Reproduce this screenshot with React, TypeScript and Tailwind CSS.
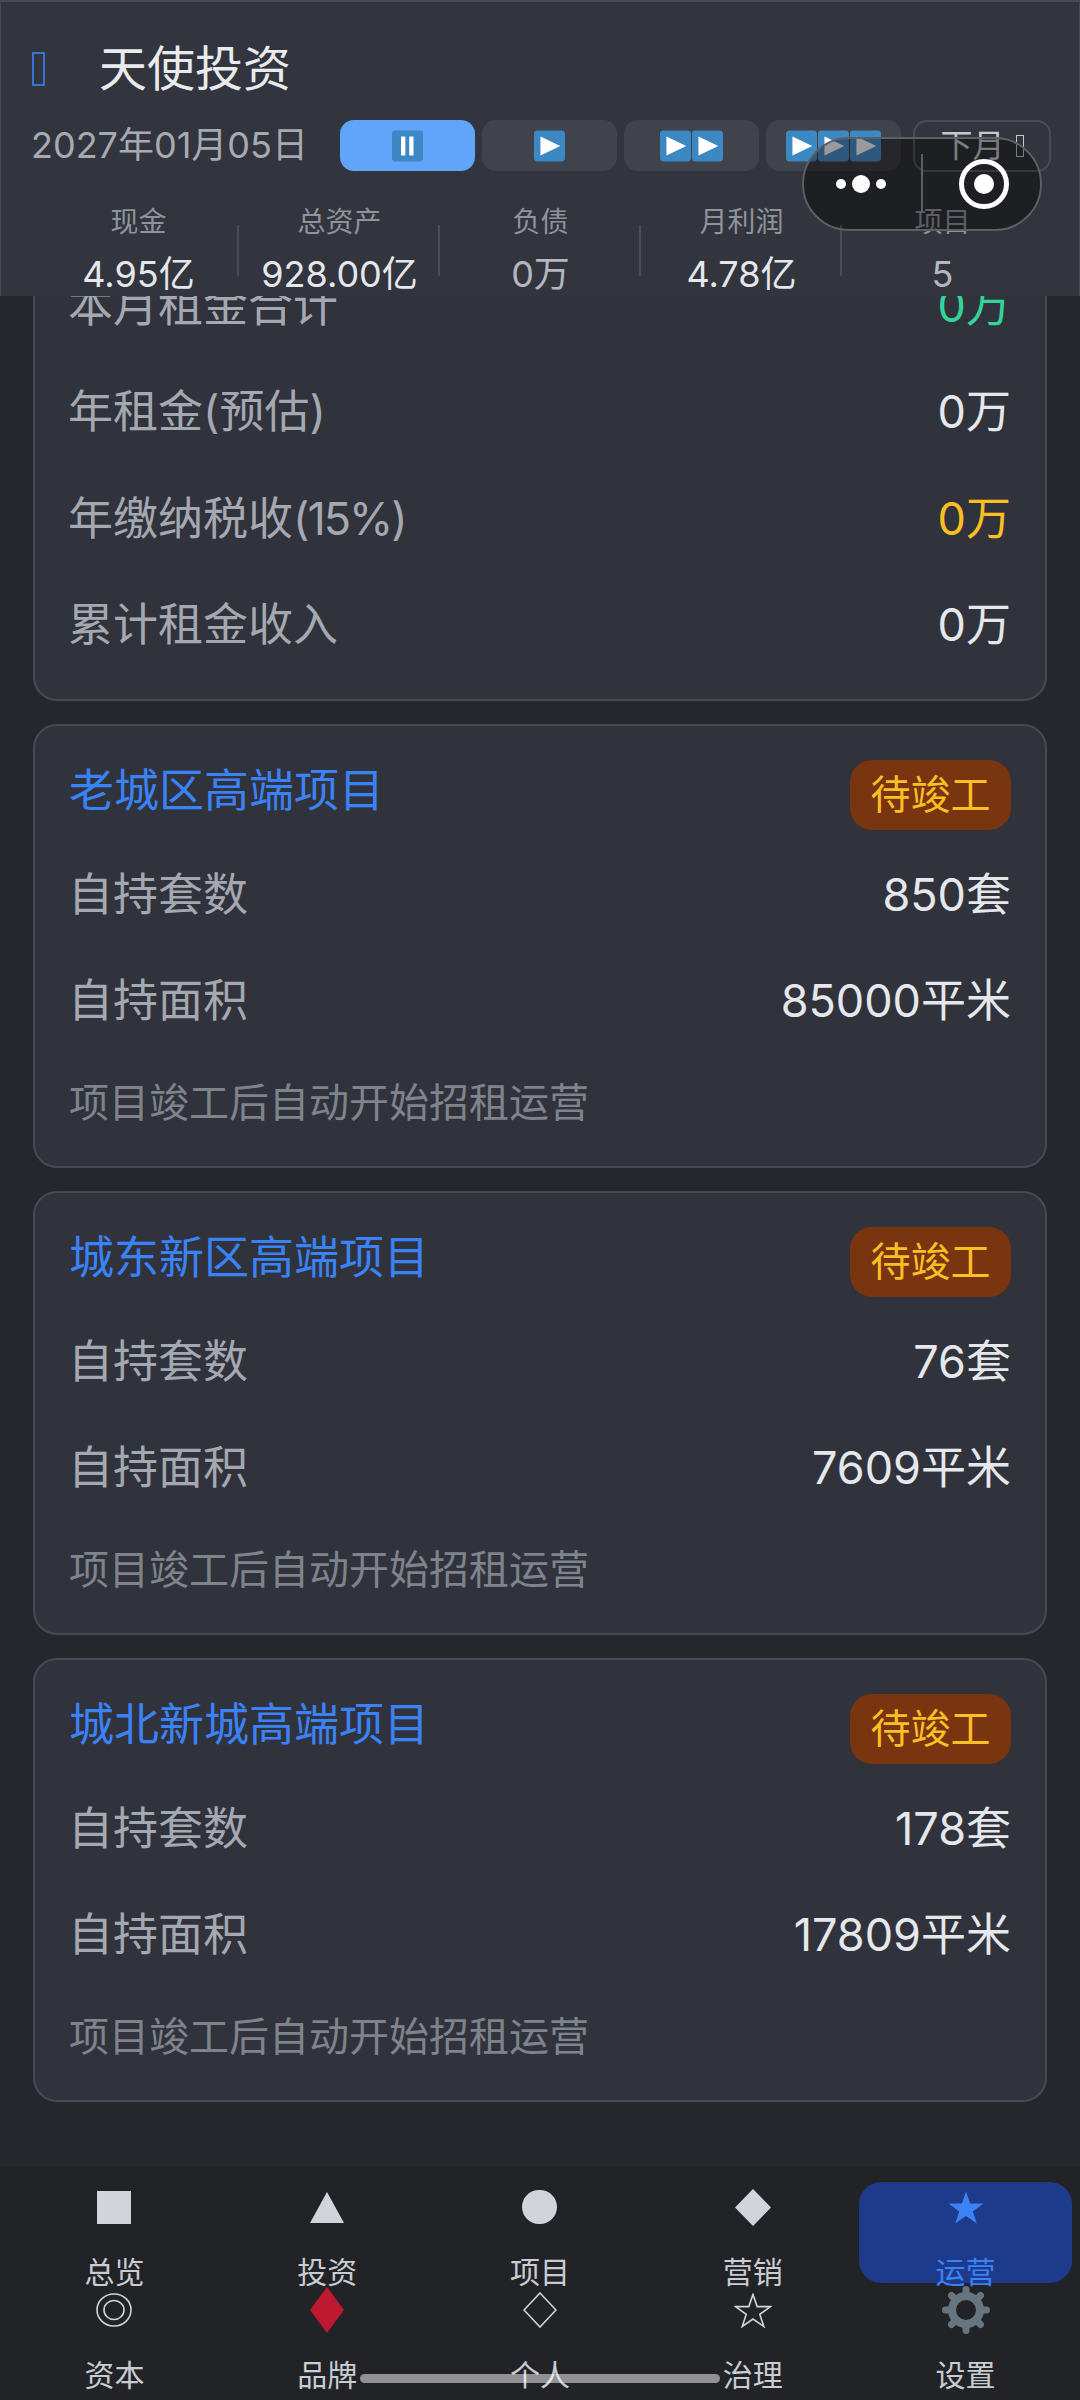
import React from "react";

const Play = () => (
  <svg width="31" height="32" viewBox="0 0 36 36" className="shrink-0">
    <rect x="0" y="0" width="36" height="36" rx="4" fill="#3b88c3" />
    <path d="M7.5 7 L30.5 18 L7.5 29 Z" fill="#ffffff" />
  </svg>
);

const Pause = () => (
  <svg width="31" height="32" viewBox="0 0 36 36" className="shrink-0">
    <rect x="0" y="0" width="36" height="36" rx="4" fill="#3b88c3" />
    <rect x="10.5" y="7" width="5" height="22" fill="#ffffff" />
    <rect x="20" y="7" width="5" height="22" fill="#ffffff" />
  </svg>
);

const SpeedButton = ({ active, children }: { active?: boolean; children: React.ReactNode }) => (
  <div
    className={
      active
        ? "flex h-[51px] w-[135px] items-center justify-center gap-[1px] rounded-[14px] bg-[#60a5fa]"
        : "flex h-[51px] w-[135px] items-center justify-center gap-[1px] rounded-[14px] bg-white/[0.07]"
    }
  >
    {children}
  </div>
);

const stats = [
  { label: "现金", value: "4.95亿", color: "text-[#e5e7eb]" },
  { label: "总资产", value: "928.00亿", color: "text-[#e5e7eb]" },
  { label: "负债", value: "0万", color: "text-[#b4b7bd]" },
  { label: "月利润", value: "4.78亿", color: "text-[#e5e7eb]" },
  { label: "项目", value: "5", color: "text-[#b4b7bd]" },
];

const Header = () => (
  <header className="absolute left-0 top-0 z-10 h-[296px] w-[1080px] border-x border-t-2 border-[#474a53] bg-[#32353d]">
    <div className="absolute left-[801px] top-[135px] h-[94px] w-[240px] rounded-full bg-[#1e1f23]" />
    <div className="relative z-10 flex h-full flex-col pl-[31px]">
      <div className="mt-[22px] flex h-[70px] shrink-0 items-center pt-[20px]">
        <div className="h-[34px] w-[13px] border-2 border-[#3b74d0]" />
        <span className="ml-[54px] text-[48px] leading-[56px] text-[#e9eaec]">天使投资</span>
      </div>
      <div className="mt-[26px] flex h-[51px] shrink-0 items-center">
        <span className="-ml-[1px] w-[309px] shrink-0 text-[36px] leading-[51px] text-[#a6aab2]">2027年01月05日</span>
        <div className="flex gap-[7px]">
          <SpeedButton active>
            <Pause />
          </SpeedButton>
          <SpeedButton>
            <Play />
          </SpeedButton>
          <SpeedButton>
            <Play />
            <Play />
          </SpeedButton>
          <SpeedButton>
            <Play />
            <Play />
            <Play />
          </SpeedButton>
        </div>
        <div className="ml-[12px] flex h-[52px] w-[138px] items-center justify-center gap-[11px] rounded-[14px] border-2 border-[#494c55] text-[32px] text-[#c6c8cc]">
          <span>下月</span>
          <span className="h-[22px] w-[8px] border border-[#c6c8cc]" />
        </div>
      </div>
      <div className="ml-[6px] mt-[31px] grid w-[1005px] grid-cols-5">
        {stats.map((s, i) => (
          <div key={s.label} className="relative flex flex-col items-center">
            <span className="text-[28px] leading-[40px] text-[#8f939b]">{s.label}</span>
            <span className={"mt-[10px] text-[36px] leading-[44px] " + s.color}>{s.value}</span>
            {i < 4 && <div className="absolute right-0 top-[23px] h-[51px] w-[2px] bg-[#4a4d56]" />}
          </div>
        ))}
      </div>
    </div>
    <div className="absolute left-[801px] top-[135px] z-20 h-[94px] w-[240px] rounded-full border-2 border-[#5d5f64] bg-[#1e1f23]/45">
      <svg width="240" height="94" viewBox="0 0 240 94" className="absolute -left-[2px] -top-[2px]">
        <circle cx="39" cy="47" r="5" fill="#fff" />
        <circle cx="59" cy="47" r="9" fill="#fff" />
        <circle cx="79" cy="47" r="5" fill="#fff" />
        <rect x="119" y="17" width="2" height="58" fill="#5d5f64" />
        <circle cx="182" cy="47" r="22.5" fill="none" stroke="#fff" strokeWidth="5" />
        <circle cx="182" cy="47" r="10" fill="#fff" />
      </svg>
    </div>
  </header>
);

const Row = ({ label, value, valueClass }: { label: React.ReactNode; value: string; valueClass?: string }) => (
  <div className="flex h-[106.5px] items-center justify-between">
    <span className="-ml-[1px] text-[45px] text-[#a4a8b0]">{label}</span>
    <span className={"text-[45px] " + (valueClass ?? "text-[#e5e7eb]")}>{value}</span>
  </div>
);

const projects = [
  { name: "老城区高端项目", units: "850套", area: "85000平米" },
  { name: "城东新区高端项目", units: "76套", area: "7609平米" },
  { name: "城北新城高端项目", units: "178套", area: "17809平米" },
];

const ProjectCard = ({ name, units, area }: { name: string; units: string; area: string }) => (
  <section className="h-[444px] rounded-[24px] border-2 border-[#474a53] bg-[#30333b] p-[34px]">
    <div className="flex h-[70px] items-center justify-between">
      <span className="mb-[8px] text-[45px] leading-[56px] text-[#3b82f6]">{name}</span>
      <span className="flex h-[70px] w-[161px] items-center justify-center rounded-[22px] bg-[#78350f] text-[40px] text-[#fbbf24]">
        待竣工
      </span>
    </div>
    <div className="mt-[11px]">
      <Row label="自持套数" value={units} />
      <Row label="自持面积" value={area} />
    </div>
    <p className="mt-[21px] text-[40px] leading-[56px] text-[#7f838b]">项目竣工后自动开始招租运营</p>
  </section>
);

const Star = ({ fill, stroke }: { fill: string; stroke?: string }) => (
  <svg width="38" height="35" viewBox="0 0 38 35">
    <path
      d="M19 1.5 L23.2 13.6 L36.5 13.6 L25.8 21.4 L29.8 33.5 L19 26 L8.2 33.5 L12.2 21.4 L1.5 13.6 L14.8 13.6 Z"
      fill={fill}
      stroke={stroke ?? "none"}
      strokeWidth={stroke ? 1.6 : 0}
      strokeLinejoin="miter"
    />
  </svg>
);

const Gear = () => {
  const angles = [0, 45, 90, 135, 180, 225, 270, 315];
  return (
    <svg width="48" height="48" viewBox="0 0 48 48">
      <circle cx="24" cy="24" r="14" fill="none" stroke="#66757f" strokeWidth="8" />
      {angles.map((a) => (
        <line
          key={a}
          x1="24"
          y1="8"
          x2="24"
          y2="3.5"
          stroke="#66757f"
          strokeWidth="7"
          strokeLinecap="round"
          transform={`rotate(${a} 24 24)`}
        />
      ))}
    </svg>
  );
};

const c = "#d1d5db";
const navRow1: { label: string; icon: React.ReactNode; active?: boolean }[] = [
  { label: "总览", icon: <div className="h-[33px] w-[34px] bg-[#d1d5db]" /> },
  {
    label: "投资",
    icon: (
      <svg width="34" height="31" viewBox="0 0 34 31">
        <path d="M17 0 L34 31 L0 31 Z" fill={c} />
      </svg>
    ),
  },
  { label: "项目", icon: <div className="h-[34px] w-[35px] rounded-full bg-[#d1d5db]" /> },
  {
    label: "营销",
    icon: (
      <svg width="36" height="37" viewBox="0 0 36 37">
        <path d="M18 0 L36 18.5 L18 37 L0 18.5 Z" fill={c} />
      </svg>
    ),
  },
  { label: "运营", icon: <Star fill="#3b82f6" />, active: true },
];
const navRow2: { label: string; icon: React.ReactNode }[] = [
  {
    label: "资本",
    icon: (
      <svg width="36" height="34" viewBox="0 0 36 34">
        <ellipse cx="18" cy="17" rx="17" ry="16" fill="none" stroke={c} strokeWidth="1.6" />
        <ellipse cx="18" cy="17" rx="10" ry="9.5" fill="none" stroke={c} strokeWidth="1.6" />
      </svg>
    ),
  },
  {
    label: "品牌",
    icon: (
      <svg width="34" height="46" viewBox="0 0 34 46">
        <path d="M17 0 L34 23 L17 46 L0 23 Z" fill="#be1931" />
      </svg>
    ),
  },
  {
    label: "个人",
    icon: (
      <svg width="34" height="36" viewBox="0 0 34 36">
        <path d="M17 1 L33 18 L17 35 L1 18 Z" fill="none" stroke={c} strokeWidth="1.6" />
      </svg>
    ),
  },
  { label: "治理", icon: <Star fill="none" stroke={c} /> },
  { label: "设置", icon: <Gear /> },
];

const NavItem = ({ label, icon, active }: { label: string; icon: React.ReactNode; active?: boolean }) => (
  <div
    className={
      "flex h-[101px] flex-col items-center rounded-[22px] " + (active ? "bg-[#1e3a8a] text-[#3b82f6]" : "text-[#c9ccd2]")
    }
  >
    <div className="flex h-[50px] shrink-0 items-center justify-center">{icon}</div>
    <span className="mt-[25px] shrink-0 text-[30px] leading-[30px]">{label}</span>
  </div>
);

export default function App() {
  return (
    <div className="relative h-[2400px] w-[1080px] overflow-hidden bg-[#26272c] font-['Inter','Noto_Sans_CJK_SC',sans-serif]">
      <Header />
      <main className="flex flex-col gap-[23px] px-[33px] pt-[230px]">
        <section className="h-[471px] rounded-[24px] border-2 border-[#474a53] bg-[#30333b] px-[34px] pt-[20px]">
          <Row label="本月租金合计" value="0万" valueClass="text-[#34d399]" />
          <Row label="年租金(预估)" value="0万" />
          <Row
            label={
              <>
                年缴纳税收<span className="tracking-[-2px]">(15%)</span>
              </>
            }
            value="0万"
            valueClass="text-[#fbbf24]"
          />
          <Row label="累计租金收入" value="0万" />
        </section>
        {projects.map((p) => (
          <ProjectCard key={p.name} {...p} />
        ))}
      </main>
      <nav className="absolute bottom-0 left-0 h-[233px] w-[1080px] bg-[#222327] px-[8px] pt-[15px]">
        <div className="grid grid-cols-5">
          {navRow1.map((n) => (
            <NavItem key={n.label} {...n} />
          ))}
        </div>
        <div className="mt-[2px] grid grid-cols-5">
          {navRow2.map((n) => (
            <NavItem key={n.label} {...n} />
          ))}
        </div>
      </nav>
      <div className="absolute left-[360px] top-[2374px] h-[9px] w-[360px] rounded-full bg-white/50" />
    </div>
  );
}
